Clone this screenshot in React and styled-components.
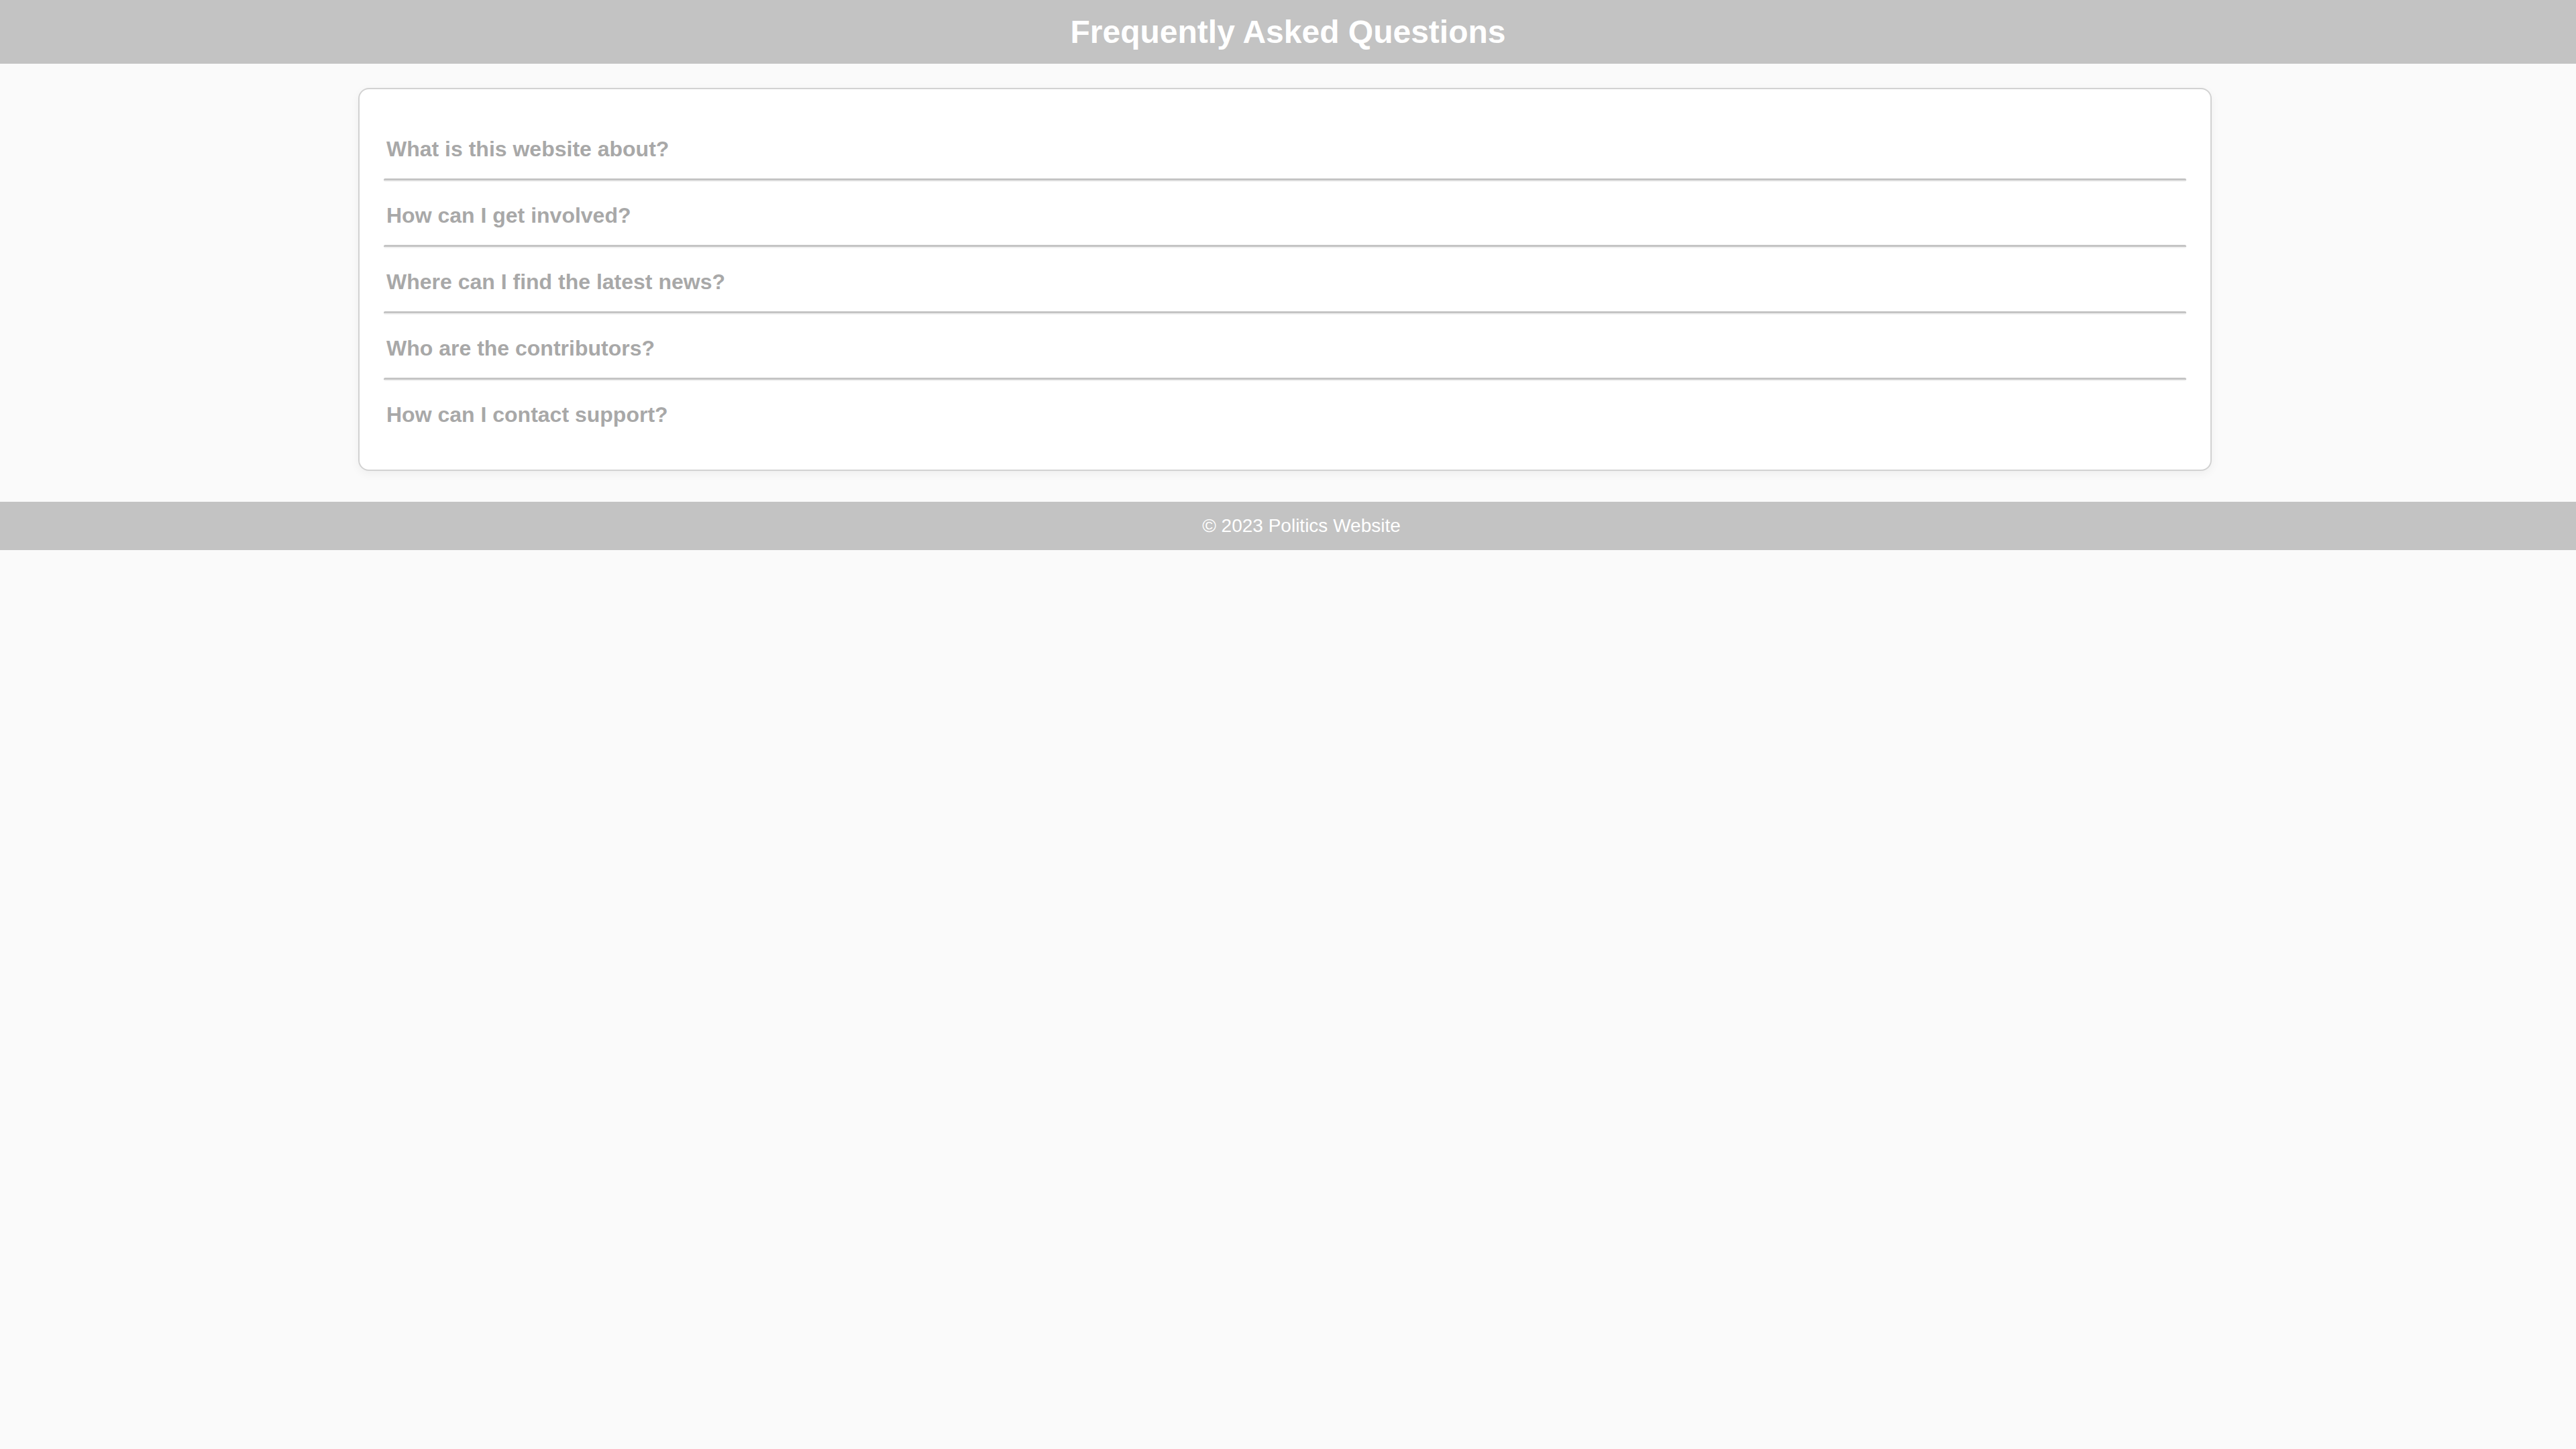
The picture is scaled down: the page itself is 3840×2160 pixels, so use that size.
import React from 'react'
import styled, { createGlobalStyle } from 'styled-components'

const questions = [
  'What is this website about?',
  'How can I get involved?',
  'Where can I find the latest news?',
  'Who are the contributors?',
  'How can I contact support?',
]

export default function App() {
  return (
    <>
      <GlobalStyle />
      <Page>
        <Header>
          <Title>Frequently Asked Questions</Title>
        </Header>
        <Main>
          <Card>
            {questions.map((q, i) => (
              <Item key={q}>
                <Question>{q}</Question>
                {i < questions.length - 1 && <Divider />}
              </Item>
            ))}
          </Card>
        </Main>
        <Footer>© 2023 Politics Website</Footer>
      </Page>
    </>
  )
}

/* ------- STYLING ------- */

const GlobalStyle = createGlobalStyle`
  html, body {
    margin: 0;
    padding: 0;
    background: #fafafa;
    font-family: "Liberation Sans", Arial, sans-serif;
  }
`
const Page = styled.div`
  min-height: 100vh;
  background: #fafafa;
`
const Header = styled.header`
  background: #c3c3c3;
  padding: 20px 0;
  text-align: center;
`
const Title = styled.h1`
  margin: 0;
  font-size: 48px;
  line-height: 55px;
  font-weight: 700;
  color: #ffffff;
`
const Main = styled.main`
  padding: 36px 9px 46px 0;
`
const Card = styled.section`
  width: 2763px;
  box-sizing: border-box;
  margin: 0 auto;
  padding: 39px 36px 38px;
  background: #ffffff;
  border: 2px solid #d2d2d2;
  border-radius: 16px;
  box-shadow: 0 4px 14px rgba(0, 0, 0, 0.05);
`
const Item = styled.div`
  padding-top: 31px;
`
const Question = styled.h3`
  margin: 0 0 25px;
  padding: 0 4px;
  font-size: 32px;
  line-height: 38px;
  font-weight: 700;
  color: #a8a8a8;
`
const Divider = styled.hr`
  margin: 0;
  height: 0;
  border: none;
  border-top: 3px solid #c4c4c4;
  border-bottom: 2px solid #f1f1f1;
  border-radius: 2px;
`
const Footer = styled.footer`
  background: #c3c3c3;
  padding: 20px 0 20px 40px;
  text-align: center;
  font-size: 28px;
  line-height: 32px;
  color: #ffffff;
`
